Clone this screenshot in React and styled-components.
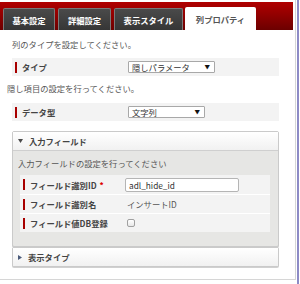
import React from "react";
import styled, { createGlobalStyle } from "styled-components";

const Global = createGlobalStyle`
  html, body { margin: 0; padding: 0; background: #fff; }
  body { font-family: "Noto Sans CJK JP", "Noto Sans", sans-serif; font-size: 8.3px; color: #555; }
  * { box-sizing: border-box; }
`;

const Page = styled.div`
  display: flex;
  width: 300px;
  height: 284px;
`;

const Frame = styled.div`
  width: 296px;
  height: 280px;
  padding: 2px 2px 0 0;
  border-right: 1px solid #d6d6d6;
  border-bottom: 1px solid #d6d6d6;
  display: flex;
  flex-direction: column;
`;

const Edge = styled.div`
  width: 2px;
  height: 100%;
  margin-left: 1px;
  background: #8d8bc6;
`;

const TabBar = styled.div`
  height: 28px;
  display: flex;
  align-items: flex-end;
  gap: 3px;
  padding-left: 3px;
  background: linear-gradient(#b10000, #6c0000);
`;

const Tab = styled.div`
  width: ${(p) => p.$w}px;
  height: ${(p) => (p.$active ? 23 : 22)}px;
  display: flex;
  align-items: center;
  justify-content: center;
  font-weight: bold;
  font-size: 8.3px;
  border-radius: 2px 2px 0 0;
  ${(p) =>
    p.$active
      ? `background: #fff; color: #555; margin-left: -1px;`
      : `background: linear-gradient(#4a4a4a, #363636); color: #fff; border: 1px solid #7a7a7a; border-bottom: none;`}
`;

const Content = styled.div`
  display: flex;
  flex-direction: column;
  padding: 0 14px 0 7px;
`;

const Note = styled.div`
  line-height: 12px;
  margin-top: ${(p) => p.$mt}px;
  padding-left: ${(p) => p.$pl || 0}px;
  color: #555;
`;

const Row = styled.div`
  display: flex;
  align-items: center;
  height: ${(p) => p.$h || 18}px;
  margin-top: ${(p) => p.$mt || 0}px;
  margin-left: ${(p) => p.$ml || 0}px;
  background: #f3f3f3;
`;

const Label = styled.div`
  width: ${(p) => p.$w}px;
  flex: none;
  display: flex;
  align-items: center;
  height: 100%;
  padding-left: 3px;
  font-weight: bold;
  color: #444;
`;

const Bar = styled.span`
  width: 2px;
  height: 11px;
  background: #a80000;
  margin-right: 5px;
`;

const Req = styled.span`
  color: #d00;
  margin-left: 3px;
`;

const Select = styled.div`
  width: ${(p) => p.$w}px;
  height: 12px;
  background: #fff;
  border: 1px solid #a8a8a8;
  border-radius: 1px;
  display: flex;
  align-items: center;
  justify-content: space-between;
  padding: 0 4px 0 3px;
  color: #333;
  line-height: 10px;
`;

const Arrow = styled.span`
  font-size: 5.5px;
  color: #111;
`;

const Panel = styled.div`
  margin-left: 5px;
  border: 1px solid #cacaca;
  border-radius: 2px;
  margin-top: ${(p) => p.$mt || 0}px;
  background: #e6e6e4;
  box-shadow: 0 1px 0 #d0d0d0;
`;

const Head = styled.div`
  height: ${(p) => p.$h}px;
  display: flex;
  align-items: center;
  padding-left: 5px;
  gap: 6px;
  font-weight: bold;
  color: #444;
  background: linear-gradient(#ffffff, #f1f1f1);
  border-bottom: ${(p) => (p.$open ? "1px solid #cfcfcf" : "none")};
`;

const Body = styled.div`
  padding: 6px 8px 14px 5px;
  display: flex;
  flex-direction: column;
`;

const Table = styled.div`
  margin-top: 6px;
  margin-left: 2px;
  display: flex;
  flex-direction: column;
  gap: 1px;
  background: #fff;
`;

const Value = styled.div`
  padding-left: ${(p) => p.$pl || 0}px;
  color: #555;
  display: flex;
  align-items: center;
`;

const Input = styled.div`
  width: 114px;
  height: 14px;
  background: #fff;
  border: 1px solid #b5b5b5;
  border-radius: 2px;
  padding-left: 3px;
  display: flex;
  align-items: center;
  color: #333;
`;

const Check = styled.span`
  width: 8px;
  height: 8px;
  border: 1px solid #a0a0a0;
  border-radius: 2px;
  background: linear-gradient(#fff, #e8e8e8);
  margin-left: 2px;
`;

const Down = () => (
  <svg width="5" height="4" viewBox="0 0 5 4">
    <path d="M0 0 L5 0 L2.5 4 Z" fill="#4a4a4a" />
  </svg>
);
const Right = () => (
  <svg width="4" height="5" viewBox="0 0 4 5">
    <path d="M0 0 L4 2.5 L0 5 Z" fill="#4a5a7a" />
  </svg>
);

export default function App() {
  return (
    <>
      <Global />
      <Page>
        <Frame>
          <TabBar>
            <Tab $w={52}>基本設定</Tab>
            <Tab $w={53}>詳細設定</Tab>
            <Tab $w={69}>表示スタイル</Tab>
            <Tab $w={71} $active>列プロパティ</Tab>
          </TabBar>
          <Content>
            <Note $mt={8} $pl={5}>列のタイプを設定してください。</Note>
            <Row $mt={8} $ml={5}>
              <Label $w={116}><Bar />タイプ</Label>
              <Select $w={87}>隠しパラメータ<Arrow>▼</Arrow></Select>
            </Row>
            <Note $mt={6}>隠し項目の設定を行ってください。</Note>
            <Row $mt={9} $ml={5}>
              <Label $w={116}><Bar />データ型</Label>
              <Select $w={77}>文字列<Arrow>▼</Arrow></Select>
            </Row>
            <Panel $mt={10}>
              <Head $h={19} $open><Down />入力フィールド</Head>
              <Body>
                <Note $mt={0}>入力フィールドの設定を行ってください</Note>
                <Table>
                  <Row $h={19}>
                    <Label $w={105}><Bar />フィールド識別ID<Req>*</Req></Label>
                    <Input>adl_hide_id</Input>
                  </Row>
                  <Row $h={18}>
                    <Label $w={105}><Bar />フィールド識別名</Label>
                    <Value $pl={2}>インサートID</Value>
                  </Row>
                  <Row $h={18}>
                    <Label $w={105}><Bar />フィールド値DB登録</Label>
                    <Value><Check /></Value>
                  </Row>
                </Table>
              </Body>
            </Panel>
            <Panel $mt={0}>
              <Head $h={18}><Right />表示タイプ</Head>
            </Panel>
          </Content>
        </Frame>
        <Edge />
      </Page>
    </>
  );
}
